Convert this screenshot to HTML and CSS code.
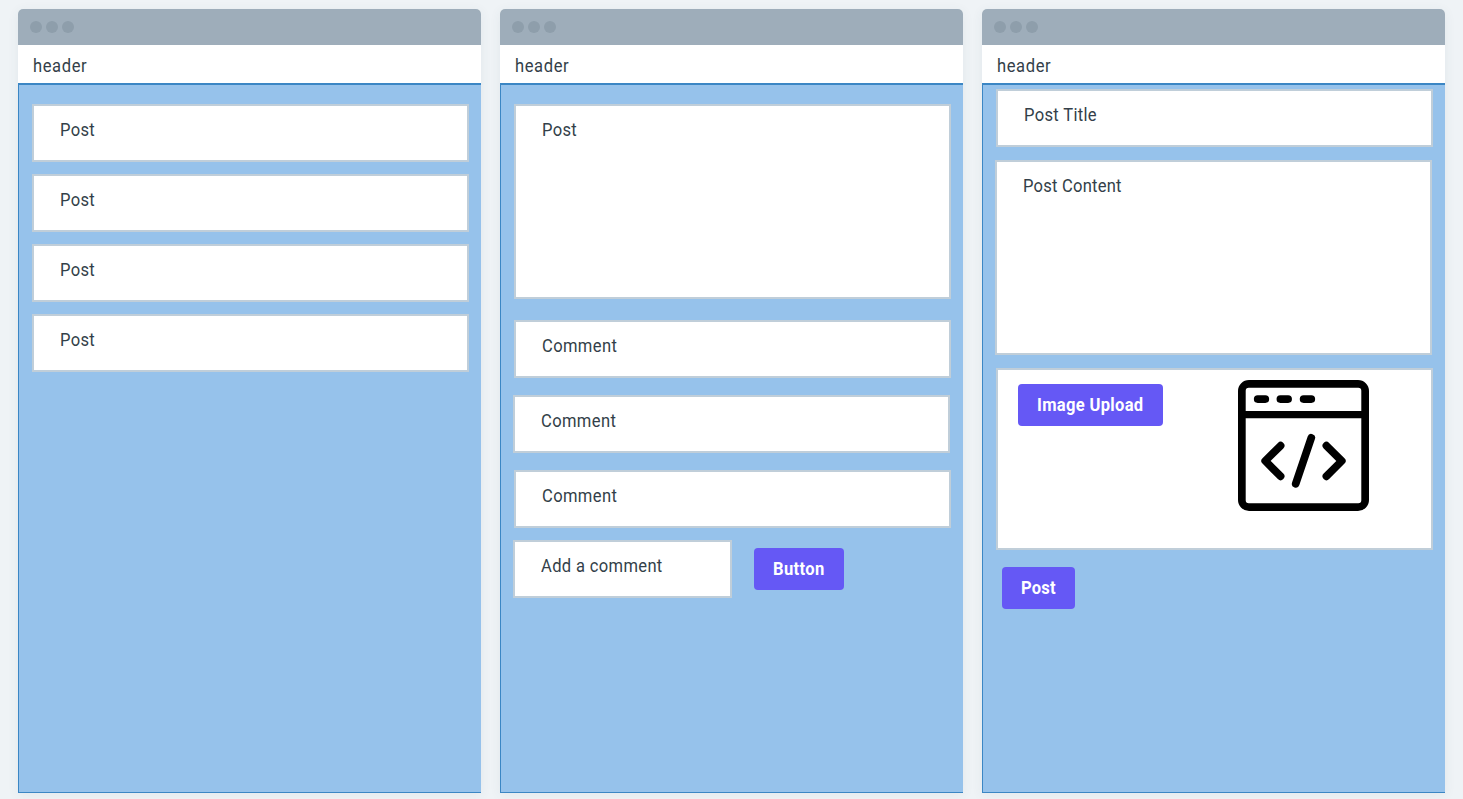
FILE: index.html
```html
<!DOCTYPE html>
<html lang="en">
<head>
<meta charset="utf-8">
<title>Wireframes</title>
<link rel="stylesheet" href="styles.css">
</head>
<body>
<main class="board">
  <section class="window">
    <div class="titlebar"><i class="dot"></i><i class="dot"></i><i class="dot"></i></div>
    <header class="header"><span class="t-header">header</span></header>
    <div class="content list">
      <div class="box"><span class="t-post">Post</span></div>
      <div class="box"><span class="t-post">Post</span></div>
      <div class="box"><span class="t-post">Post</span></div>
      <div class="box"><span class="t-post">Post</span></div>
    </div>
  </section>

  <section class="window">
    <div class="titlebar"><i class="dot"></i><i class="dot"></i><i class="dot"></i></div>
    <header class="header"><span class="t-header">header</span></header>
    <div class="content detail">
      <div class="box tall"><span class="t-post">Post</span></div>
      <div class="comments">
        <div class="box"><span class="t-comment">Comment</span></div>
        <div class="box outdent"><span class="t-comment">Comment</span></div>
        <div class="box"><span class="t-comment">Comment</span></div>
      </div>
      <div class="add-row">
        <div class="box short"><span class="t-add">Add a comment</span></div>
        <button class="button w-button"><span class="t-button">Button</span></button>
      </div>
    </div>
  </section>

  <section class="window">
    <div class="titlebar"><i class="dot"></i><i class="dot"></i><i class="dot"></i></div>
    <header class="header"><span class="t-header">header</span></header>
    <div class="content create">
      <div class="box"><span class="t-title">Post Title</span></div>
      <div class="box tall outdent"><span class="t-content">Post Content</span></div>
      <div class="box upload">
        <button class="button w-upload"><span class="t-upload">Image Upload</span></button>
        <svg class="code-icon" viewBox="0 0 131 131" fill="none" stroke="#000" stroke-width="7.7" stroke-linecap="round" stroke-linejoin="round">
          <path fill="#000" stroke="none" fill-rule="evenodd" d="M11 0H120A11 11 0 0 1 131 11V120A11 11 0 0 1 120 131H11A11 11 0 0 1 0 120V11A11 11 0 0 1 11 0ZM10.7 7.7A3 3 0 0 0 7.7 10.7V31H123.3V10.7A3 3 0 0 0 120.3 7.7ZM7.7 38.2V120.3A3 3 0 0 0 10.7 123.3H120.3A3 3 0 0 0 123.3 120.3V38.2Z"/>
          <path d="M19.7 19.1H27.3M42.4 19.1H50.1M65.6 19.1H73.3"/>
          <path d="M42.6 65.7L27.2 80.9L42.6 96.3M88.4 65.7L103.8 80.9L88.4 96.3M73.3 57.8L57.7 103.8"/>
        </svg>
      </div>
      <button class="button w-post"><span class="t-postbtn">Post</span></button>
    </div>
  </section>
</main>
</body>
</html>
```
FILE: styles.css
```css
* { box-sizing: border-box; }
body {
  margin: 0;
  height: 799px;
  overflow: hidden;
  background: #eff3f6;
  color: #333f49;
  font: 18px/26px Roboto, "Liberation Sans", sans-serif;
}
.board { display: flex; gap: 19px; padding: 9px 18px 0; }
.window {
  display: flex;
  flex-direction: column;
  width: 463px;
  height: 784px;
  flex: none;
  border-radius: 5px 5px 0 0;
  background: #fff;
  box-shadow: 0 2px 12px rgba(60, 80, 100, 0.07);
}
.titlebar {
  display: flex;
  align-items: center;
  gap: 4px;
  height: 36px;
  padding-left: 12px;
  border-radius: 5px 5px 0 0;
  background: #9eadba;
}
.dot { width: 12px; height: 12px; border-radius: 50%; background: #8e9eab; }
.header { height: 38px; padding: 8px 0 0 15px; white-space: nowrap; }
.content {
  display: flex;
  flex-direction: column;
  align-items: flex-start;
  flex: 1;
  padding: 19px 0 0 13px;
  border: solid #3b86c4;
  border-width: 2px 0 1px 1px;
  background: #96c2eb;
}
.list { gap: 12px; }
.box {
  flex: none;
  width: 437px;
  height: 58px;
  padding: 11px 0 0 26px;
  border: 2px solid #c0ced9;
  background: #fff;
  white-space: nowrap;
}
.tall { height: 195px; }
.outdent { margin-left: -1px; }
.comments { display: flex; flex-direction: column; gap: 17px; margin-top: 21px; }
.add-row { display: flex; align-items: flex-start; gap: 22px; margin: 12px 0 0 -1px; }
.short { width: 219px; }
.button {
  height: 42px;
  padding: 0 0 0 19px;
  border: 0;
  border-radius: 4px;
  background: #6558f5;
  color: #fff;
  font: 700 18px/42px Roboto, "Liberation Sans", sans-serif;
  text-align: left;
  white-space: nowrap;
}
.w-button { width: 90px; margin-top: 8px; }
.w-upload { width: 145px; margin-top: 4px; }
.w-post { width: 73px; margin: 17px 0 0 6px; }
.create { gap: 13px; padding-top: 4px; }
.create .w-post { margin-top: 4px; }
.upload { display: flex; align-items: flex-start; height: 182px; padding: 10px 0 0 20px; }
.code-icon { width: 131px; height: 131px; margin-left: 75px; }

/* Slightly condensed, loosely tracked lettering */
.window span { display: inline-block; transform: scaleX(0.92); transform-origin: 0 50%; }
.t-header { letter-spacing: 0.65px; }
.t-post { letter-spacing: 0.35px; }
.t-comment { letter-spacing: 0.4px; }
.t-add { letter-spacing: 0.37px; }
.t-title { letter-spacing: 0.36px; }
.t-content { letter-spacing: 0.25px; }
.t-button { letter-spacing: 0.4px; }
.t-upload { letter-spacing: 0.34px; }
.t-postbtn { letter-spacing: 0.2px; }
```
